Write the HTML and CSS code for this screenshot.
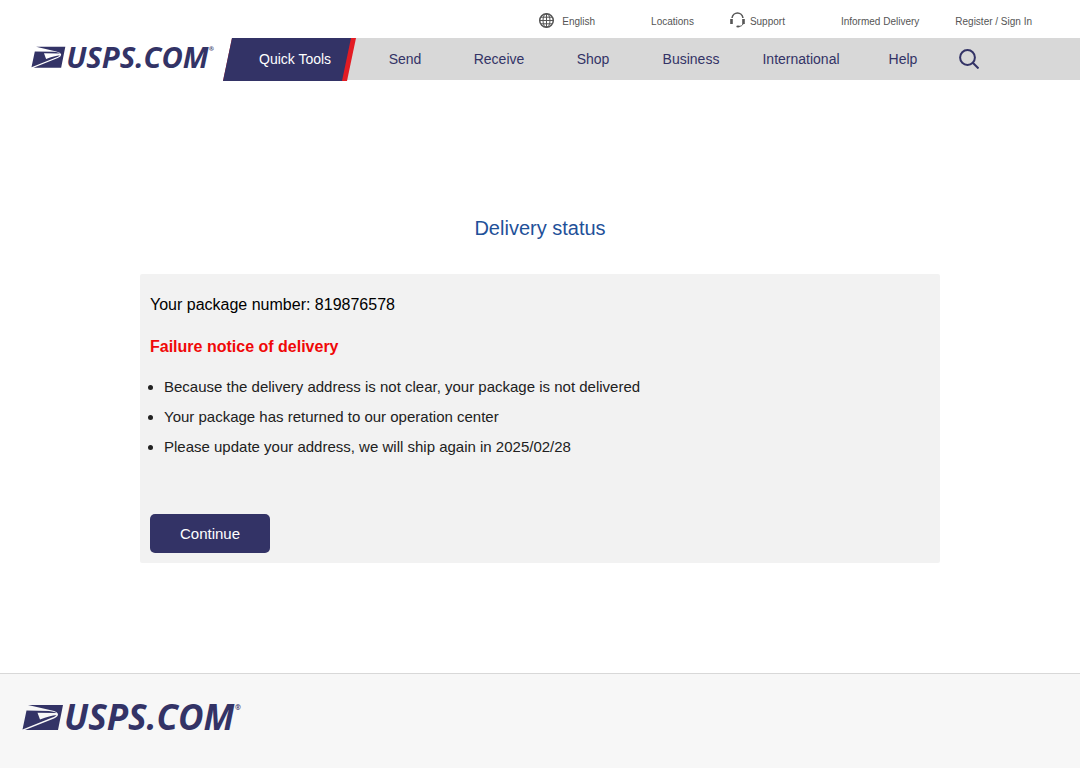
FILE: index.html
```html
<!DOCTYPE html>
<html lang="en">
<head>
  <meta charset="UTF-8" />
  <meta name="viewport" content="width=device-width, initial-scale=1.0" />
  <title>Delivery status</title>
  <link rel="stylesheet" href="styles.css">
</head>
<body>
  <header>
    <nav class="utility" aria-label="Utility">
      <a href="#" class="language">
        <svg class="globe" viewBox="0 0 16 16" aria-hidden="true">
          <circle cx="8.500" cy="7.500" r="6.800" stroke-width="1.500"/>
          <ellipse cx="8.500" cy="7.500" rx="3.500" ry="6.800"/>
          <path d="M8.500 1v13M2 7.500h13M3 4.200h11M3 10.800h11"/>
        </svg>English</a>
      <a href="#">Locations</a>
      <a href="#" class="support">
        <svg class="headset" viewBox="0 0 16 16" aria-hidden="true">
          <path d="M2 5C2.500 2 5 0 7.500 0s5 2 5.500 5" stroke-width="1.500"/>
          <path d="M1.500 6v5M13.500 6v5" stroke-width="2.600"/>
          <path d="M13 11c-.6 1.500-2 2.300-4.500 2.500" stroke-width="1"/>
          <ellipse cx="8" cy="13.500" rx="1.700" ry="1"  fill="#555" stroke="none"/>
        </svg>Support</a>
      <a href="#">Informed Delivery</a>
      <a href="#">Register / Sign In</a>
    </nav>

    <div class="main-bar">
      <a href="#" class="brand">
        <svg class="logo" viewBox="0 0 220 28" role="img" aria-label="USPS.COM">
          <g id="logo">
            <path d="M6 1H41L36 26H3L32 14.500Q36 12.500 36 10.500Q36 7.500 29 6.200Z"/>
            <path d="M4.500 6.500L27 7Q33.500 7.800 34.500 9L15.500 8.800L18 15.500Q28 11.500 34.500 11Q33 12.800 29 14L.5 25.500Z"/>
            <text x="42" y="26">USPS.COM</text>
            <text class="mark" x="213" y="6">®</text>
          </g>
        </svg>
      </a>
      <a href="#" class="quick-tools"><span>Quick Tools</span></a>
      <nav class="menu" aria-label="Main">
        <a href="#">Send</a>
        <a href="#">Receive</a>
        <a href="#">Shop</a>
        <a href="#">Business</a>
        <a href="#">International</a>
        <a href="#">Help</a>
        <a href="#" aria-label="Search">
          <svg class="search" viewBox="0 0 20 20" aria-hidden="true">
            <circle cx="8.500" cy="8.500" r="7.400"/>
            <path d="M13.800 13.800L19.500 19.500"/>
          </svg>
        </a>
      </nav>
    </div>
  </header>

  <main>
    <h1>Delivery status</h1>
    <section class="card">
      <p>Your package number: 819876578</p>
      <h2>Failure notice of delivery</h2>
      <ul>
        <li>Because the delivery address is not clear, your package is not delivered</li>
        <li>Your package has returned to our operation center</li>
        <li>Please update your address, we will ship again in 2025/02/28</li>
      </ul>
      <button type="button">Continue</button>
    </section>
  </main>

  <footer>
    <svg class="logo logo-large" viewBox="0 0 220 28" role="img" aria-label="USPS.COM">
      <use href="#logo"/>
    </svg>
  </footer>
</body>
</html>
```

FILE: styles.css
```css
* {
  box-sizing: border-box;
}
body {
  margin: 0;
  min-height: 100vh;
  display: flex;
  flex-direction: column;
  font-family: "Liberation Sans", Arial, sans-serif;
  background-color: #fff;
  color: #212121;
}
a {
  color: inherit;
  text-decoration: none;
}
.utility {
  display: flex;
  justify-content: flex-end;
  align-items: center;
  height: 38px;
  padding: 4px 48px 0 0;
  gap: 36px;
  font-size: 10px;
  color: #555;
}
.utility a {
  display: flex;
  align-items: center;
}
.language, .support {
  margin-right: 20px;
}
.globe, .headset {
  width: 16px;
  height: 16px;
  fill: none;
  stroke: #555;
  overflow: visible;
}
.globe {
  margin-right: 8px;
}
.headset {
  margin-right: 4px;
}
.main-bar {
  display: flex;
  height: 42px;
  font-size: 14px;
  color: #333366;
}
.brand {
  width: 223px;
  padding: 8px 0 0 31px;
}
.logo {
  display: block;
  width: 184px;
  overflow: visible;
  fill: #333366;
  font-family: "Open Sans", sans-serif;
  font-size: 35px;
  font-weight: 700;
  font-style: italic;
}
.mark {
  font-size: 7px;
  font-style: normal;
}
.quick-tools {
  position: relative;
  width: 133px;
  height: 43px;
  margin-right: -10px;
  background-color: #e31b23;
  color: #fff;
  clip-path: polygon(9px 0, 100% 0, 124px 100%, 0 100%);
}
.quick-tools span {
  display: block;
  height: 100%;
  padding-left: 36px;
  line-height: 42px;
  background-color: #333366;
  clip-path: polygon(0 0, 128px 0, 119px 100%, 0 100%);
}
.menu {
  flex: 1;
  display: grid;
  grid-template-columns: 94px 94px 94px 102px 118px 86px 46px;
  align-items: center;
  padding-left: 12px;
  background-color: #d8d8d8;
}
.menu a {
  display: flex;
  justify-content: center;
}
.search {
  width: 20px;
  height: 20px;
  fill: none;
  stroke: #333366;
  stroke-width: 2;
}
main {
  flex: 1;
  width: 100%;
  max-width: 800px;
  margin: 0 auto;
  padding: 136px 0 110px;
}
h1 {
  margin: 0 0 34px;
  font-size: 20px;
  line-height: 24px;
  font-weight: 400;
  text-align: center;
  color: #1f5199;
}
.card {
  padding: 20px 10px 10px;
  background-color: #f2f2f2;
  border-radius: 2px;
}
.card p {
  margin: 0 0 20px;
  font-size: 16px;
  line-height: 22px;
  color: #000;
}
.card h2 {
  margin: 0 0 14px;
  font-size: 16px;
  line-height: 22px;
  color: #f00808;
}
.card ul {
  margin: 0 0 52px;
  padding-left: 14px;
  font-size: 15px;
  line-height: 30px;
}
button {
  display: block;
  width: 120px;
  height: 39px;
  border: none;
  border-radius: 5px;
  background-color: #333366;
  color: #fff;
  font-family: inherit;
  font-size: 15px;
  cursor: pointer;
}
footer {
  min-height: 95px;
  padding: 30px 22px;
  border-top: 1px solid #d8d8d8;
  background-color: #f7f7f7;
}
.logo-large {
  width: 220px;
}
```
